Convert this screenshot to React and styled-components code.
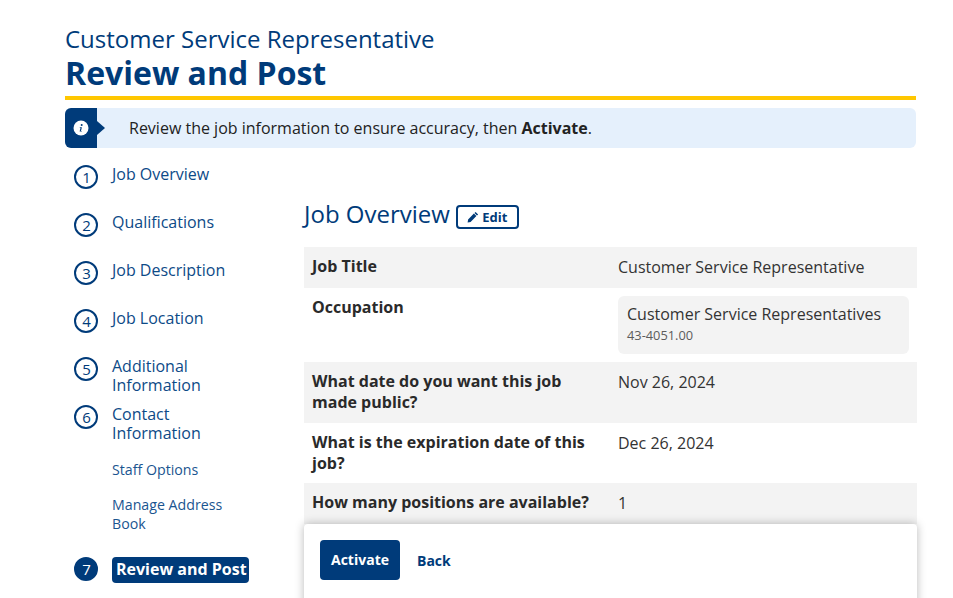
import React from "react";
import styled, { createGlobalStyle } from "styled-components";

const navy = "#003b7a";

const GlobalStyle = createGlobalStyle`
  html, body {
    margin: 0;
    padding: 0;
    background: #fff;
    overflow: hidden;
    font-family: "Open Sans", "Liberation Sans", sans-serif;
    color: #222;
  }
`;

const Page = styled.div`
  width: 953px;
  height: 598px;
  box-sizing: border-box;
  padding: 22px 37px 0 65px;
  overflow: hidden;
`;

const Eyebrow = styled.div`
  font-size: 24px;
  line-height: 33px;
  color: ${navy};
`;

const Title = styled.h1`
  margin: 0;
  font-size: 32px;
  line-height: 36px;
  font-weight: 700;
  color: ${navy};
  padding-bottom: 5px;
  border-bottom: 4px solid #ffc700;
`;

const Alert = styled.div`
  display: flex;
  align-items: center;
  height: 40px;
  margin-top: 8px;
  background: #e5f0fc;
  border-radius: 6px;
  font-size: 16px;
  overflow: hidden;
`;

const AlertFlag = styled.div`
  position: relative;
  display: flex;
  align-items: center;
  justify-content: center;
  width: 32px;
  height: 40px;
  flex: none;
  background: ${navy};
  &::after {
    content: "";
    position: absolute;
    left: 32px;
    top: 13px;
    border-left: 8px solid ${navy};
    border-top: 7px solid transparent;
    border-bottom: 7px solid transparent;
  }
`;

const AlertText = styled.div`
  margin-left: 32px;
  b {
    font-weight: 700;
  }
`;

const Columns = styled.div`
  display: flex;
  align-items: flex-start;
`;

const Steps = styled.nav`
  width: 239px;
  flex: none;
  padding: 17px 0 0 9px;
  box-sizing: border-box;
`;

const Step = styled.div`
  display: flex;
  align-items: flex-start;
  gap: 14px;
  min-height: 48px;
`;

const Bullet = styled.div`
  width: 24px;
  height: 24px;
  flex: none;
  box-sizing: border-box;
  display: flex;
  align-items: center;
  justify-content: center;
  padding-left: 1px;
  border-radius: 50%;
  border: 2px solid ${navy};
  font-size: 15px;
  color: ${(p) => (p.$active ? "#fff" : navy)};
  background: ${(p) => (p.$active ? navy : "#fff")};
`;

const StepLabel = styled.div`
  font-size: 16px;
  line-height: 19px;
  color: #0d4a87;
  width: 120px;
`;

const ActiveLabel = styled.div`
  font-size: 16px;
  line-height: 19px;
  font-weight: 700;
  color: #fff;
  background: ${navy};
  border-radius: 4px;
  padding: 3px 2px 4px 4px;
  white-space: nowrap;
`;

const SubLink = styled.div`
  font-size: 14.2px;
  line-height: 19px;
  color: #1a5590;
  margin-left: 38px;
  width: 125px;
  margin-bottom: ${(p) => p.$mb || 0}px;
`;

const SubList = styled.div`
  margin-top: 7px;
  margin-bottom: 24px;
`;

const Main = styled.main`
  position: relative;
  flex: 1;
  height: 450px;
  padding-top: 48px;
  box-sizing: border-box;
`;

const SectionHead = styled.div`
  display: flex;
  align-items: center;
  gap: 6px;
  height: 34px;
  margin-bottom: 17px;
`;

const SectionTitle = styled.h2`
  margin: 0;
  font-size: 24px;
  line-height: 33px;
  font-weight: 400;
  color: ${navy};
`;

const EditButton = styled.button`
  display: inline-flex;
  align-items: center;
  gap: 3px;
  width: 63px;
  height: 24px;
  justify-content: center;
  padding: 0;
  margin-top: 7px;
  background: #fff;
  border: 2px solid ${navy};
  border-radius: 4px;
  font: 700 13px "Open Sans", sans-serif;
  color: ${navy};
`;

const Row = styled.div`
  display: flex;
  width: 613px;
  box-sizing: border-box;
  padding: 8px;
  background: ${(p) => (p.$plain ? "#fff" : "#f3f3f3")};
  min-height: ${(p) => p.$h}px;
`;

const Label = styled.div`
  width: 306px;
  flex: none;
  padding: 1px 10px 0 0;
  box-sizing: border-box;
  font-size: 16px;
  line-height: 21px;
  font-weight: 700;
  color: #2a2a2a;
`;

const Value = styled.div`
  font-size: 16px;
  line-height: 24px;
  color: #333;
`;

const OccupationCard = styled.div`
  width: 291px;
  height: 58px;
  box-sizing: border-box;
  padding: 7px 8px 7px 9px;
  border-radius: 6px;
  background: #f3f3f3;
  font-size: 16px;
  line-height: 22px;
  color: #333;
  small {
    display: block;
    font-size: 12.8px;
    line-height: 21px;
    color: #5c5c5c;
  }
`;

const ActionBar = styled.div`
  position: absolute;
  left: 0;
  top: 376px;
  width: 613px;
  height: 90px;
  box-sizing: border-box;
  padding: 16px;
  display: flex;
  gap: 17px;
  align-items: flex-start;
  background: #fff;
  border-radius: 4px;
  box-shadow: 0 0 10px rgba(0, 0, 0, 0.28);
`;

const ActivateButton = styled.button`
  width: 80px;
  height: 40px;
  padding: 0 0 2px;
  border: 0;
  border-radius: 4px;
  background: ${navy};
  color: #fff;
  font: 700 14px "Open Sans", sans-serif;
`;

const BackLink = styled.a`
  font-size: 14px;
  line-height: 42px;
  font-weight: 700;
  color: ${navy};
`;

const InfoIcon = () => (
  <svg width="16" height="16" viewBox="0 0 16 16">
    <circle cx="8" cy="8" r="7.5" fill="#fff" />
    <circle cx="8.7" cy="5" r="1" fill={navy} />
    <path d="M6.9 7.3h2L8 10.9h.8v.7H6.6l.9-3.6h-.8z" fill={navy} />
  </svg>
);

const PencilIcon = () => (
  <svg width="12" height="12" viewBox="0 0 12 12">
    <path d="M8.6.9 11.1 3.4 10 4.5 7.5 2zM6.9 2.6 9.4 5.1 3.6 10.9.6 11.4 1.1 8.4z" fill={navy} />
  </svg>
);

const App = () => (
  <Page>
    <GlobalStyle />
    <Eyebrow>Customer Service Representative</Eyebrow>
    <Title>Review and Post</Title>
    <Alert>
      <AlertFlag>
        <InfoIcon />
      </AlertFlag>
      <AlertText>
        Review the job information to ensure accuracy, then <b>Activate</b>.
      </AlertText>
    </Alert>
    <Columns>
      <Steps>
        <Step>
          <Bullet>1</Bullet>
          <StepLabel>Job Overview</StepLabel>
        </Step>
        <Step>
          <Bullet>2</Bullet>
          <StepLabel>Qualifications</StepLabel>
        </Step>
        <Step>
          <Bullet>3</Bullet>
          <StepLabel>Job Description</StepLabel>
        </Step>
        <Step>
          <Bullet>4</Bullet>
          <StepLabel>Job Location</StepLabel>
        </Step>
        <Step>
          <Bullet>5</Bullet>
          <StepLabel>Additional Information</StepLabel>
        </Step>
        <Step>
          <Bullet>6</Bullet>
          <StepLabel>Contact Information</StepLabel>
        </Step>
        <SubList>
          <SubLink $mb={16}>Staff Options</SubLink>
          <SubLink>Manage Address Book</SubLink>
        </SubList>
        <Step>
          <Bullet $active>7</Bullet>
          <ActiveLabel>Review and Post</ActiveLabel>
        </Step>
      </Steps>
      <Main>
        <SectionHead>
          <SectionTitle>Job Overview</SectionTitle>
          <EditButton>
            <PencilIcon />
            Edit
          </EditButton>
        </SectionHead>
        <Row $h={41}>
          <Label>Job Title</Label>
          <Value>Customer Service Representative</Value>
        </Row>
        <Row $plain $h={74}>
          <Label>Occupation</Label>
          <OccupationCard>
            Customer Service Representatives
            <small>43-4051.00</small>
          </OccupationCard>
        </Row>
        <Row $h={61}>
          <Label>What date do you want this job made public?</Label>
          <Value>Nov 26, 2024</Value>
        </Row>
        <Row $plain $h={60}>
          <Label>What is the expiration date of this job?</Label>
          <Value>Dec 26, 2024</Value>
        </Row>
        <Row $h={41}>
          <Label>How many positions are available?</Label>
          <Value>1</Value>
        </Row>
        <ActionBar>
          <ActivateButton>Activate</ActivateButton>
          <BackLink>Back</BackLink>
        </ActionBar>
      </Main>
    </Columns>
  </Page>
);

export default App;
